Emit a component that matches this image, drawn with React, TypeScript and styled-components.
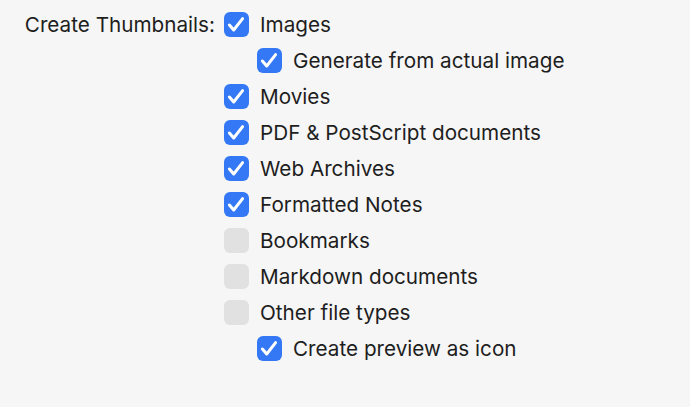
import React from "react";
import styled, { createGlobalStyle } from "styled-components";

const Global = createGlobalStyle`
  html, body { margin: 0; padding: 0; background: #f6f6f6; }
  body { font-family: "Inter", "Noto Sans", "Liberation Sans", sans-serif; color: #1e1e1e; }
`;

const Page = styled.div`
  width: 690px;
  height: 407px;
  box-sizing: border-box;
  padding: 6px 0 0 0;
  display: grid;
  grid-template-columns: 215px 1fr;
  column-gap: 9px;
  align-items: start;
`;

const Label = styled.div`
  height: 36px;
  display: flex;
  align-items: center;
  justify-content: flex-end;
  font-size: 20.7px;
`;

const List = styled.div`
  display: flex;
  flex-direction: column;
`;

const Row = styled.label<{ $indent?: boolean }>`
  height: 36px;
  display: flex;
  align-items: center;
  gap: 11px;
  padding-left: ${(p) => (p.$indent ? 33 : 0)}px;
  font-size: 20.7px;
`;

const Box = styled.span<{ $checked: boolean }>`
  width: 25px;
  height: 25px;
  border-radius: 6px;
  background: ${(p) => (p.$checked ? "#3478f6" : "#e1e1e1")};
  display: block;
  flex: none;
`;

const Check = () => (
  <svg width="25" height="25" viewBox="0 0 25 25" fill="none" style={{ display: "block" }}>
    <path d="M5.4 13 L9.7 18 L18.6 6.6" stroke="#fff" strokeWidth="3" strokeLinecap="round" strokeLinejoin="round" />
  </svg>
);

const items: { text: string; checked: boolean; indent?: boolean }[] = [
  { text: "Images", checked: true },
  { text: "Generate from actual image", checked: true, indent: true },
  { text: "Movies", checked: true },
  { text: "PDF & PostScript documents", checked: true },
  { text: "Web Archives", checked: true },
  { text: "Formatted Notes", checked: true },
  { text: "Bookmarks", checked: false },
  { text: "Markdown documents", checked: false },
  { text: "Other file types", checked: false },
  { text: "Create preview as icon", checked: true, indent: true },
];

export default function App() {
  return (
    <>
      <Global />
      <Page>
        <Label>Create Thumbnails:</Label>
        <List>
          {items.map((it) => (
            <Row key={it.text} $indent={it.indent}>
              <Box $checked={it.checked}>{it.checked && <Check />}</Box>
              <span>{it.text}</span>
            </Row>
          ))}
        </List>
      </Page>
    </>
  );
}
